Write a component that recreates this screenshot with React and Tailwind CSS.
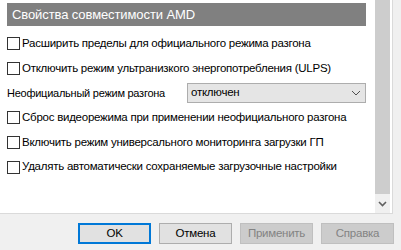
import React from "react";

function Box({ label }) {
  return (
    <div className="flex items-center">
      <div className="w-[13px] h-[13px] border border-[#333333] bg-white shrink-0" />
      <span className="ml-[2px] whitespace-nowrap">{label}</span>
    </div>
  );
}

function Btn({ children, primary, disabled }) {
  const cls = primary
    ? "border-2 border-[#0078d7] bg-[#e1e1e1] text-black"
    : disabled
    ? "border border-[#bfbfbf] bg-[#cccccc] text-[#838383]"
    : "border border-[#adadad] bg-[#e1e1e1] text-black";
  return (
    <div className={`w-[73px] h-[21px] flex items-center justify-center ${cls}`}>
      {children}
    </div>
  );
}

export default function App() {
  return (
    <div
      className="w-[401px] h-[250px] bg-[#f0f0f0] flex flex-col text-[11.5px] tracking-[-0.25px] leading-none overflow-hidden"
      style={{ fontFamily: '"Liberation Sans", Arial, sans-serif' }}
    >
      <div className="h-[214px] w-[393px] bg-white border-b border-r border-[#dadada] flex shrink-0">
        <div className="w-[375px] pl-[7px] flex flex-col">
          <div className="mt-[3px] h-[23px] w-[359px] bg-[#808080] text-white flex items-center pl-[5px] text-[13px] tracking-[-0.1px]">
            Свойства совместимости AMD
          </div>
          <div className="mt-[5px] h-[25px] flex items-center">
            <Box label="Расширить пределы для официального режима разгона" />
          </div>
          <div className="h-[25px] flex items-center">
            <Box label="Отключить режим ультранизкого энергопотребления (ULPS)" />
          </div>
          <div className="h-[24px] flex items-center">
            <span className="w-[180px] shrink-0 whitespace-nowrap text-[11px]">Неофициальный режим разгона</span>
            <div className="w-[179px] shrink-0 h-[20px] bg-[#e5e5e5] border border-[#adadad] flex items-center justify-between pl-[3px] pr-[4px]">
              <span>отключен</span>
              <svg width="10" height="6" viewBox="0 0 10 6">
                <polyline points="1,1 5,5 9,1" fill="none" stroke="#505050" strokeWidth="1" />
              </svg>
            </div>
          </div>
          <div className="h-[25px] flex items-center">
            <Box label="Сброс видеорежима при применении неофициального разгона" />
          </div>
          <div className="h-[25px] flex items-center">
            <Box label="Включить режим универсального мониторинга загрузки ГП" />
          </div>
          <div className="h-[24px] flex items-center">
            <Box label="Удалять автоматически сохраняемые загрузочные настройки" />
          </div>
        </div>
        <div className="w-[15px] flex flex-col">
          <div className="h-[194px] bg-[#cdcdcd]" />
          <div className="flex-1 bg-[#f0f0f0] flex items-center justify-center">
            <svg width="9" height="6" viewBox="0 0 9 6">
              <polyline points="1,1 4.5,4.5 8,1" fill="none" stroke="#606060" strokeWidth="1.6" />
            </svg>
          </div>
        </div>
      </div>
      <div className="flex justify-end gap-[8px] pr-[7px] mt-[9px]">
        <Btn primary>OK</Btn>
        <Btn>Отмена</Btn>
        <Btn disabled>Применить</Btn>
        <Btn disabled>Справка</Btn>
      </div>
    </div>
  );
}
